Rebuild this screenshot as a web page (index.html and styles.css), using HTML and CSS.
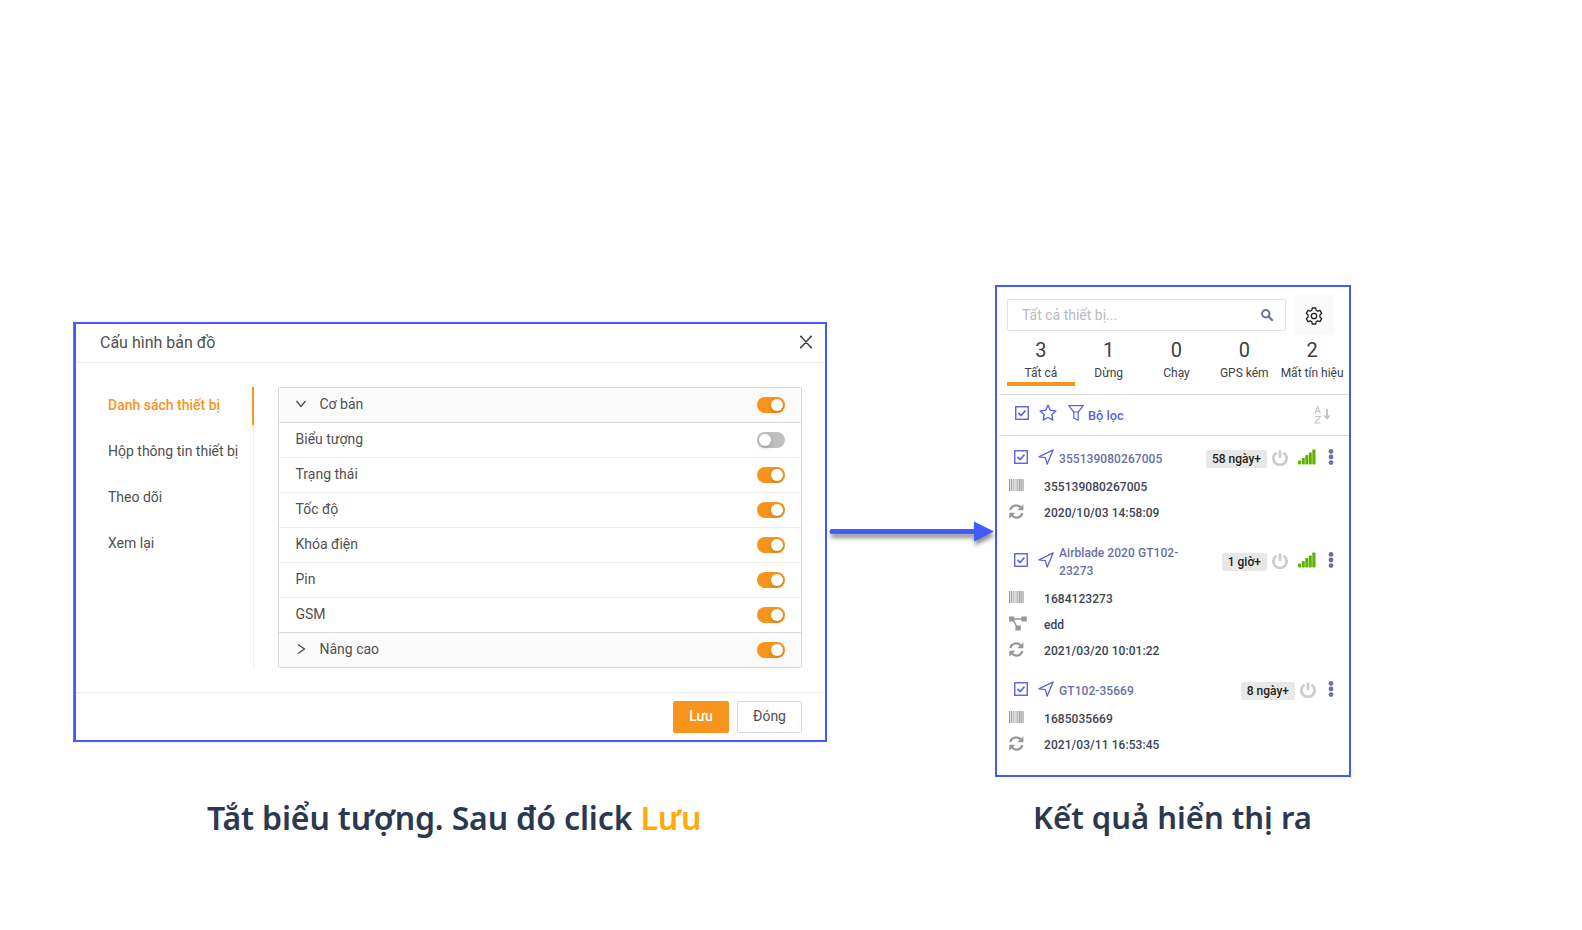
FILE: index.html
```
<!DOCTYPE html>
<html lang="vi">
<head>
<meta charset="utf-8">
<title>Cấu hình bản đồ</title>
<link rel="stylesheet" href="styles.css">
</head>
<body>
<svg class="defs" width="0" height="0" aria-hidden="true">
  <symbol id="check" viewBox="0 0 14 14"><rect x=".75" y=".75" width="12.5" height="12.5" fill="none" stroke="currentColor" stroke-width="1.4"/><path d="M3.500 6.900l2.600 2.600 4.400-5" fill="none" stroke="currentColor" stroke-width="1.700"/></symbol>
  <symbol id="nav" viewBox="0 0 16 16"><path d="M15.200.8L.9 7.800l6.400.9 1.800 6.500z" fill="none" stroke="currentColor" stroke-width="1.300" stroke-linejoin="round"/></symbol>
  <symbol id="power" viewBox="0 0 16 16"><path d="M4.600 2.600a6.600 6.600 0 1 0 6.800 0M8 .4v7.600" fill="none" stroke="currentColor" stroke-width="2.700"/></symbol>
  <symbol id="signal" viewBox="0 0 18 16"><g fill="currentColor"><rect x="0" y="11.500" width="3.200" height="4" rx="1"/><rect x="3.800" y="9" width="3" height="6.500" rx=".8"/><rect x="7.300" y="6" width="3" height="9.500" rx=".8"/><rect x="10.800" y="3.500" width="3" height="12" rx=".8"/><rect x="14.300" y=".500" width="3.200" height="15" rx=".8"/></g></symbol>
  <symbol id="dots" viewBox="0 0 6 16"><circle cx="3" cy="2.400" r="2.400" fill="currentColor"/><circle cx="3" cy="8" r="2.400" fill="currentColor"/><circle cx="3" cy="13.600" r="2.400" fill="currentColor"/></symbol>
  <symbol id="barcode" viewBox="0 0 15 12"><path d="M0 0h14.500v12H0z" fill="#dcdcdc"/><path d="M0 0h1v12H0zM2.200 0h.8v12h-.8zM10 0h.8v12H10zM11.600 0h.9v12h-.9zM13.600 0h.9v12h-.9z" fill="#999"/><path d="M4.200 0h1v12h-1zM7.500 0h1.700v12H7.500z" fill="#bdbdbd"/></symbol>
  <symbol id="sync" viewBox="0 0 15 15"><path d="M1.300 6a6.100 6.100 0 0 1 10.800-2.200M13.400 9a6.100 6.100 0 0 1-10.800 2.200" fill="none" stroke="currentColor" stroke-width="2.200"/><path d="M14.400.2v6H8.400zM.3 14.800v-6h6z" fill="currentColor"/></symbol>
  <symbol id="group" viewBox="0 0 18 15"><path d="M0 .5h5.400v5H0zM12.400.5h5.400v5h-5.400zM6.400 9.500h5.400v5H6.400z" fill="currentColor"/><path d="M4 3h10M4 4l4 7" stroke="currentColor" stroke-width="1.500" fill="none"/></symbol>
</svg>
<main class="stage">
  <section class="config">
    <div class="dialog">
      <header class="dialog-head"><span>Cấu hình bản đồ</span>
        <svg class="close" viewBox="0 0 12 12"><path d="M1 .500L11 11.500M11 .500L1 11.500M0 .500h2.200M9.800.500H12M0 11.500h2.200M9.800 11.500H12" stroke="#3c3c3c" stroke-width="1.400" fill="none"/></svg>
      </header>
      <div class="dialog-body">
        <nav class="menu">
          <a class="menu-item active">Danh sách thiết bị</a>
          <a class="menu-item">Hộp thông tin thiết bị</a>
          <a class="menu-item">Theo dõi</a>
          <a class="menu-item">Xem lại</a>
        </nav>
        <div class="options">
          <div class="row group"><svg class="caret" viewBox="0 0 10 10"><path d="M.5 2l4.500 5.500L9.500 2" fill="none" stroke="#444" stroke-width="1.200"/></svg><span>Cơ bản</span><i class="switch"></i></div>
          <div class="row"><span>Biểu tượng</span><i class="switch off"></i></div>
          <div class="row"><span>Trạng thái</span><i class="switch"></i></div>
          <div class="row"><span>Tốc độ</span><i class="switch"></i></div>
          <div class="row"><span>Khóa điện</span><i class="switch"></i></div>
          <div class="row"><span>Pin</span><i class="switch"></i></div>
          <div class="row last"><span>GSM</span><i class="switch"></i></div>
          <div class="row group"><svg class="caret" viewBox="0 0 10 10"><path d="M2 .5L8.500 5 2 9.500" fill="none" stroke="#444" stroke-width="1.200"/></svg><span>Nâng cao</span><i class="switch"></i></div>
        </div>
      </div>
      <footer class="dialog-foot"><button class="btn primary">Lưu</button><button class="btn">Đóng</button></footer>
    </div>
    <p class="caption">Tắt biểu tượng. Sau đó click <em>Lưu</em></p>
  </section>

  <svg class="arrow" viewBox="0 0 168 36"><path d="M5 13.500H148" stroke="#415bff" stroke-width="5" stroke-linecap="round"/><path d="M147 3.500l20 10-20 10z" fill="#415bff"/></svg>

  <section class="result">
    <div class="panel">
      <div class="search-row">
        <div class="search"><span>Tất cả thiết bị...</span><svg viewBox="0 0 12 12"><circle cx="4.800" cy="4.800" r="3.700" fill="none" stroke="#6b7190" stroke-width="2"/><path d="M7.500 7.500L11 11" stroke="#6b7190" stroke-width="2.200" stroke-linecap="round"/></svg></div>
        <div class="gear"><svg viewBox="0 0 18 18"><path d="M7.300 1h3.400l.5 2.300 1.500.9 2.300-.8 1.700 2.900-1.800 1.600v2.200l1.800 1.600-1.700 2.900-2.300-.8-1.500.9-.5 2.300H7.300l-.5-2.300-1.500-.9-2.300.8-1.700-2.900 1.800-1.600V7.900L1.300 6.300 3 3.400l2.300.8 1.500-.9z" fill="none" stroke="#222" stroke-width="1.300" stroke-linejoin="round"/><circle cx="9" cy="9" r="2.700" fill="none" stroke="#222" stroke-width="1.300"/></svg></div>
      </div>
      <div class="tabs">
        <div class="tab on"><b>3</b><span>Tất cả</span></div>
        <div class="tab"><b>1</b><span>Dừng</span></div>
        <div class="tab"><b>0</b><span>Chạy</span></div>
        <div class="tab"><b>0</b><span>GPS kém</span></div>
        <div class="tab"><b>2</b><span>Mất tín hiệu</span></div>
      </div>
      <div class="filter">
        <svg class="i-check"><use href="#check"/></svg>
        <svg class="i-star" viewBox="0 0 18 17"><path d="M9 1.200l2.300 5 5.500.7-4 3.800 1 5.400L9 13.500l-4.800 2.600 1-5.400-4-3.800 5.500-.7z" fill="none" stroke="currentColor" stroke-width="1.400" stroke-linejoin="round"/></svg>
        <svg class="i-funnel" viewBox="0 0 16 16"><path d="M.7.700h14.600L10.200 7v8.300L5.800 13V7zM5.500 7h5" fill="none" stroke="currentColor" stroke-width="1.200" stroke-linejoin="round"/></svg>
        <span>Bộ lọc</span>
        <svg class="i-sort" viewBox="0 0 17 18"><path d="M1 7.800L3.700.8l2.700 7M1.800 5.500h3.800M1 10.500h5.200L1 17h5.600" fill="none" stroke="#c4c4c4" stroke-width="1.200"/><path d="M13 3v8" stroke="#c4c4c4" stroke-width="2"/><path d="M9.500 9.500h7L13 14z" fill="#c4c4c4"/></svg>
      </div>
      <div class="device">
        <div class="device-head"><svg class="i-check"><use href="#check"/></svg><svg class="i-nav"><use href="#nav"/></svg><span class="name">355139080267005</span><span class="badge">58 ngày+</span><svg class="i-power"><use href="#power"/></svg><svg class="i-signal"><use href="#signal"/></svg><svg class="i-dots"><use href="#dots"/></svg></div>
        <div class="info"><svg class="i-bar"><use href="#barcode"/></svg><span>355139080267005</span></div>
        <div class="info"><svg class="i-sync"><use href="#sync"/></svg><span>2020/10/03 14:58:09</span></div>
      </div>
      <div class="device">
        <div class="device-head tall"><svg class="i-check"><use href="#check"/></svg><svg class="i-nav"><use href="#nav"/></svg><span class="name">Airblade 2020 GT102-<br>23273</span><span class="badge">1 giờ+</span><svg class="i-power"><use href="#power"/></svg><svg class="i-signal"><use href="#signal"/></svg><svg class="i-dots"><use href="#dots"/></svg></div>
        <div class="info"><svg class="i-bar"><use href="#barcode"/></svg><span>1684123273</span></div>
        <div class="info"><svg class="i-group"><use href="#group"/></svg><span>edd</span></div>
        <div class="info"><svg class="i-sync"><use href="#sync"/></svg><span>2021/03/20 10:01:22</span></div>
      </div>
      <div class="device">
        <div class="device-head"><svg class="i-check"><use href="#check"/></svg><svg class="i-nav"><use href="#nav"/></svg><span class="name">GT102-35669</span><span class="badge">8 ngày+</span><svg class="i-power"><use href="#power"/></svg><svg class="i-dots"><use href="#dots"/></svg></div>
        <div class="info"><svg class="i-bar"><use href="#barcode"/></svg><span>1685035669</span></div>
        <div class="info"><svg class="i-sync"><use href="#sync"/></svg><span>2021/03/11 16:53:45</span></div>
      </div>
    </div>
    <p class="caption">Kết quả hiển thị ra</p>
  </section>
</main>
</body>
</html>
```
FILE: styles.css
```
* { box-sizing: border-box; }
body { margin: 0; background: #fff; font-family: Roboto, sans-serif; color: #505050; }
svg { display: block; flex: none; overflow: visible; }
.defs { position: absolute; }
.stage { display: flex; align-items: flex-start; width: 1582px; height: 930px; padding-left: 73px; overflow: hidden; }

.config { width: 754px; padding-top: 322px; flex: none; }
.dialog { height: 420px; border: 2px solid #415bff; border-left: 0; display: flex; flex-direction: column; font-size: 14px; background: linear-gradient(90deg, #777c94 1px, #415bff 1px, #415bff 3px, #fff 3px); padding-left: 3px; }
.dialog-head { height: 39px; border-bottom: 1px solid #ececec; padding: 0 13px 2px 24px; display: flex; align-items: center; justify-content: space-between; font-size: 16px; }
.close { width: 12px; height: 12px; }
.dialog-body { display: flex; padding: 24px 23px 24px 24px; height: 329px; }
.menu { width: 154px; height: 281px; border-right: 1px solid #ececec; margin-right: 24px; flex: none; }
.menu-item { display: flex; align-items: center; height: 38px; margin: 0 -1px 8px 0; padding: 0 0 3px 8px; white-space: nowrap; }
.menu-item.active { color: #f7941d; font-weight: 500; border-right: 2px solid #f7941d; }
.options { width: 524px; height: 281px; border: 1px solid #d9d9d9; border-radius: 2px; }
.row { display: flex; align-items: center; height: 35px; padding: 0 16px; border-bottom: 1px solid #ececec; }
.row span { padding: 0 0 3px .5px; }
.row.group { background: #fafafa; border-color: #d9d9d9; }
.row.last { border-color: #d9d9d9; }
.row.group:last-child { border-bottom: 0; height: 34px; }
.caret { width: 10px; height: 10px; margin: 0 13px 2px 1px; }
.switch { margin-left: auto; width: 28px; height: 16px; border-radius: 8px; background: #f7941d; padding: 2px; display: flex; justify-content: flex-end; }
.switch::after { content: ""; width: 12px; height: 12px; border-radius: 50%; background: #fff; box-shadow: 0 2px 4px rgba(0, 35, 11, .2); }
.switch.off { background: #bfbfbf; justify-content: flex-start; }
.dialog-foot { border-top: 1px solid #ececec; padding: 8px 23px 0; display: flex; justify-content: flex-end; gap: 8px; }
.btn { font: 14px Roboto, sans-serif; color: #505050; background: #fff; border: 1px solid #d9d9d9; border-radius: 2px; width: 65px; height: 32px; padding: 0 0 2px; }
.btn.primary { width: 56px; color: #fff; background: #f7941d; border-color: #f7941d; font-weight: 500; }

.caption { margin: 0; font: 600 32px/44px "Noto Sans", sans-serif; color: #2b3850; white-space: nowrap; }
.caption em { font-style: normal; color: #ffaa0d; }
.config .caption { padding: 54px 0 0 134px; letter-spacing: -.15px; }
.result .caption { padding: 18px 0 0 38px; font-size: 31px; }

.arrow { width: 168px; height: 36px; margin-top: 518px; filter: drop-shadow(1px 4px 2px rgba(0, 0, 0, .45)); }

.result { width: 356px; padding-top: 285px; flex: none; }
.panel { height: 492px; border: 2px solid #415bff; font-size: 12px; overflow: hidden; }
.search-row { display: flex; padding: 8px 0 0 10px; }
.search { width: 279px; height: 32px; margin-top: 4px; border: 1px solid #dfe1ea; border-radius: 2px; display: flex; align-items: center; justify-content: space-between; padding: 0 12px 0 14px; font-size: 14px; color: #b9bbc2; }
.search svg { width: 12px; height: 12px; }
.gear { width: 40px; height: 40px; margin-left: 8px; background: #fafafa; display: flex; align-items: center; justify-content: center; }
.gear svg { width: 18px; height: 18px; margin-top: 2px; }
.tabs { display: grid; grid-template-columns: repeat(5, 67.8px); margin-left: 10px; height: 51px; }
.tab { display: flex; flex-direction: column; align-items: center; white-space: nowrap; border-bottom: 4px solid transparent; color: #3c4048; }
.tab b { font-weight: 400; font-size: 20px; line-height: 24px; padding-top: 3px; }
.tab span { line-height: 18px; padding-top: 2px; }
.tab.on { border-color: #f7941d; }
.filter { display: flex; align-items: center; height: 42px; margin: 8px 0 0 2px; padding-left: 16px; border: solid #dadbde; border-width: 1px 0; color: #5a63dc; font-weight: 500; }
.filter span { margin-left: 4px; padding-top: 1px; font-size: 12.8px; }
.i-check { width: 14px; height: 14px; color: #5a63dc; }
.filter .i-check { margin-bottom: 4px; }
.i-star { width: 18px; height: 17px; margin: 0 11px 5px 10px; }
.i-funnel { width: 16px; height: 16px; margin-bottom: 4px; }
.i-sort { width: 17px; height: 18px; margin: 0 18px 0 auto; }
.device { margin-bottom: 12px; }
.filter + .device { margin-top: 6px; }
.device:nth-last-child(2) { margin-bottom: 10px; }
.device-head { display: flex; align-items: center; height: 32px; padding: 0 15px 0 17px; }
.device-head.tall { height: 48px; padding-bottom: 2px; }
.device-head .i-check { margin-bottom: 2px; }
.i-nav { width: 16px; height: 16px; color: #5a63dc; margin: 0 5px 2px 10px; }
.name { color: #6a6fa5; font-weight: 500; line-height: 18px; padding-top: 2px; letter-spacing: .07px; }
.badge { margin-left: auto; background: #e8e8e8; color: #222; font-weight: 500; border-radius: 2px; height: 18px; line-height: 18px; padding: 0 6px; margin-top: 1px; }
.i-power { width: 16px; height: 16px; color: #ccc; margin-left: 5px; }
.i-signal { width: 18px; height: 16px; color: #5fb000; margin: 0 0 2px 10px; }
.i-dots { width: 6px; height: 16px; color: #6a6fa5; margin: 0 0 3px 12px; }
.info { display: flex; align-items: center; height: 26px; padding-left: 12px; font-weight: 500; color: #3c4450; letter-spacing: .07px; }
.info svg { color: #979797; }
.info span { margin-left: 20px; }
.i-bar { width: 15px; height: 12px; margin-bottom: 4px; }
.i-sync { width: 15px; height: 15px; margin-bottom: 3px; }
.i-group { width: 18px; height: 15px; margin-bottom: 3px; }
.info .i-group + span { margin-left: 17px; }
```
